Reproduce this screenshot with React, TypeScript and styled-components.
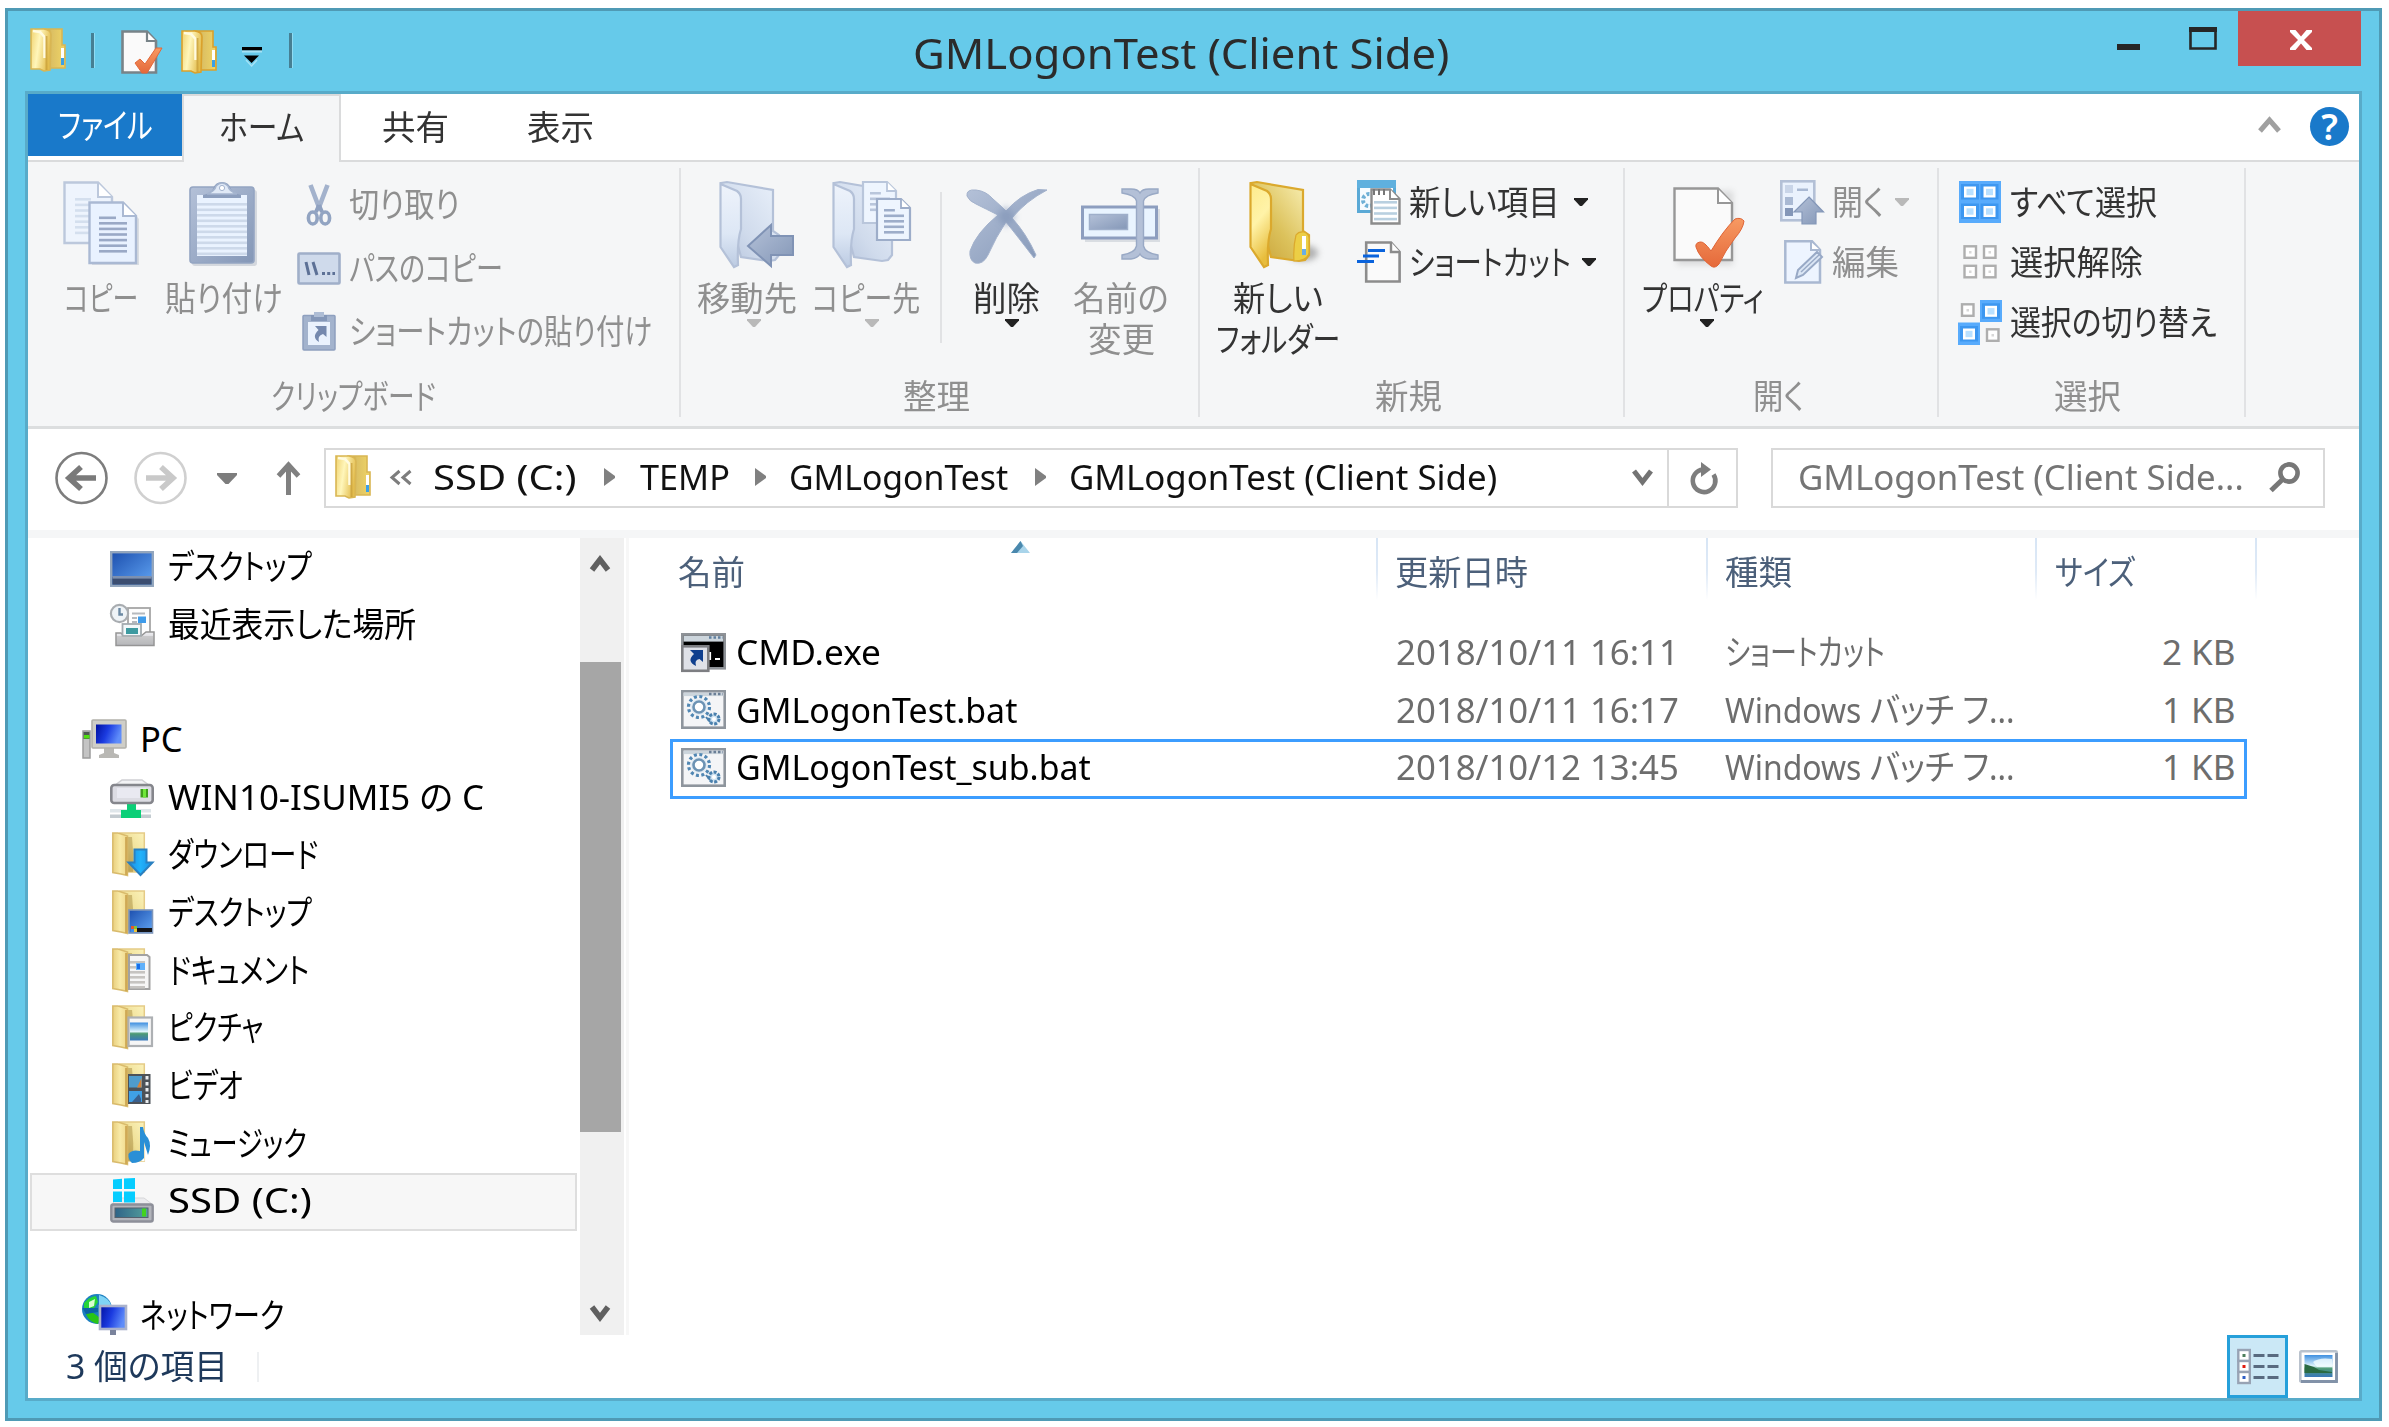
import React, { useLayoutEffect, useRef, useState } from "react";
import styled, { createGlobalStyle } from "styled-components";

const FONT = '"Noto Sans", "Noto Sans CJK JP", sans-serif';

const GlobalStyle = createGlobalStyle`
  * { box-sizing: border-box; }
  body { margin: 0; background: #fff; font-family: ${FONT}; }
  svg { display: block; flex: none; overflow: visible; }
`;

/* ---------- text fitted to a given width ---------- */

const FitBox = styled.span<{ $w: number; $ml?: number; $size: number; $color: string; $lh: number }>`
  display: block;
  flex: none;
  width: ${(p) => p.$w}px;
  height: ${(p) => p.$lh}px;
  margin-left: ${(p) => p.$ml || 0}px;
  font-size: ${(p) => p.$size}px;
  line-height: ${(p) => p.$lh}px;
  color: ${(p) => p.$color};
`;
const FitInk = styled.span`
  display: inline-block;
  white-space: pre;
  transform-origin: 0 50%;
  font-feature-settings: "palt";
`;

type FitProps = { w: number; ml?: number; size?: number; color?: string; lh?: number; children: string };
function Fit({ w, ml, size = 34, color = "#333333", lh = 41, children }: FitProps) {
  const ref = useRef<HTMLSpanElement>(null);
  const [scale, setScale] = useState(1);
  useLayoutEffect(() => {
    if (ref.current && ref.current.offsetWidth) setScale(w / ref.current.offsetWidth);
  }, [w, children]);
  return (
    <FitBox $w={w} $ml={ml} $size={size} $color={color} $lh={lh}>
      <FitInk ref={ref} style={{ transform: `scaleX(${scale})` }}>{children}</FitInk>
    </FitBox>
  );
}

/* ---------- window chrome ---------- */

const Window = styled.div`
  width: 2377px;
  height: 1413px;
  margin: 8px 0 0 5px;
  border: 3px solid #4f9ab5;
  background: #66caea;
  display: flex;
  flex-direction: column;
  overflow: hidden;
`;
const Page = styled.div`
  width: 2389px;
  height: 1427px;
  overflow: hidden;
  display: flex;
  background: #fff;
`;
const TitleBar = styled.div`
  height: 80px;
  display: flex;
  align-items: flex-start;
`;
const QuickAccess = styled.div`
  width: 908px;
  padding-left: 22px;
  display: flex;
  align-items: flex-start;
  padding-top: 17px;
`;
const QuickItem = styled.div<{ $w: number; $top?: number }>`
  width: ${(p) => p.$w}px;
  padding-top: ${(p) => p.$top || 0}px;
`;
const QuickRule = styled.div<{ $w: number }>`
  width: ${(p) => p.$w}px;
  padding-top: 5px;
  &::before { content: ""; display: block; width: 3px; height: 35px; background: #467f93; box-shadow: 1px 0 0 #8fdcf3; }
`;
const TitleText = styled.div`
  width: 1201px;
  padding-top: 16px;
`;
const CaptionButton = styled.div<{ $w: number; $top: number }>`
  width: ${(p) => p.$w}px;
  padding-top: ${(p) => p.$top}px;
`;
const CloseButton = styled.div`
  width: 123px;
  height: 55px;
  background: #c75050;
  display: flex;
  justify-content: center;
  padding: 19px 0 0 2px;
  margin-left: 1px;
`;
const Client = styled.div`
  width: 2337px;
  height: 1310px;
  margin-left: 17px;
  border: 3px solid #58abc9;
  background: #fff;
  display: flex;
  flex-direction: column;
`;

/* ---------- tabs ---------- */

const TabBar = styled.div`
  height: 68px;
  display: flex;
  border-bottom: 2px solid #dadbdc;
`;
const FileTab = styled.div`
  width: 154px;
  height: 62px;
  background: #1979ca;
  padding: 11px 0 0 31px;
`;
const HomeTab = styled.div`
  width: 159px;
  height: 68px;
  background: #f5f6f7;
  border: 2px solid #dadbdc;
  border-bottom: 0;
  padding: 11px 0 0 35px;
`;
const PlainTab = styled.div<{ $w: number }>`
  width: ${(p) => p.$w}px;
  padding: 13px 0 0 41px;
`;
const TabTools = styled.div`
  margin-left: auto;
  display: flex;
  gap: 29px;
  padding: 13px 10px 0 0;
`;
const Chevron = styled.div`
  padding-top: 9px;
`;

/* ---------- ribbon ---------- */

const Ribbon = styled.div`
  height: 267px;
  background: #f5f6f7;
  border-bottom: 3px solid #dcdedf;
  display: flex;
  padding-top: 6px;
`;
const Group = styled.div<{ $w: number }>`
  width: ${(p) => p.$w}px;
  height: 249px;
  border-right: 2px solid #e1e2e4;
  display: flex;
  flex-direction: column;
  justify-content: space-between;
`;
const GroupBody = styled.div`
  display: flex;
  align-items: flex-start;
`;
const GroupLabel = styled.div<{ $pr?: number }>`
  display: flex;
  justify-content: center;
  padding-right: ${(p) => p.$pr || 0}px;
`;
const BigButton = styled.div<{ $w: number; $ml: number }>`
  width: ${(p) => p.$w}px;
  margin-left: ${(p) => p.$ml}px;
  padding-top: 13px;
  display: flex;
  flex-direction: column;
  align-items: center;
`;
const BigIcon = styled.div<{ $dx?: number; $top?: number }>`
  height: 97px;
  padding-left: ${(p) => (p.$dx || 0) * 2}px;
  padding-top: ${(p) => p.$top || 0}px;
`;
const BigArrow = styled.div<{ $dx?: number }>`
  padding-left: ${(p) => (p.$dx || 0) * 2}px;
`;
const GroupRule = styled.div`
  width: 2px;
  height: 151px;
  margin: 24px 0 0 19px;
  background: #e1e2e4;
`;
const SmallColumn = styled.div<{ $ml: number; $top: number }>`
  margin-left: ${(p) => p.$ml}px;
  padding-top: ${(p) => p.$top}px;
`;
const SmallRow = styled.div<{ $h: number }>`
  height: ${(p) => p.$h}px;
  display: flex;
  align-items: center;
`;
const SmallIcon = styled.div`
  width: 44px;
  margin-right: 8px;
  display: flex;
  justify-content: center;
`;
const ArrowSlot = styled.div<{ $ml: number }>`
  margin-left: ${(p) => p.$ml}px;
`;

/* ---------- navigation ---------- */

const NavBar = styled.div`
  height: 101px;
  display: flex;
  align-items: center;
  padding: 0 0 3px 27px;
`;
const NavSlot = styled.div<{ $ml: number }>`
  margin-left: ${(p) => p.$ml}px;
`;
const AddressBox = styled.div`
  margin-left: 24px;
  width: 1414px;
  height: 60px;
  border: 2px solid #d9d9d9;
  display: flex;
  align-items: center;
  padding: 0 0 2px 9px;
`;
const RefreshButton = styled.div`
  width: 69px;
  height: 56px;
  margin: 0 0 -2px auto;
  border-left: 2px solid #d9d9d9;
  display: flex;
  align-items: center;
  justify-content: center;
`;
const SearchBox = styled.div`
  margin-left: 33px;
  width: 554px;
  height: 60px;
  border: 2px solid #d9d9d9;
  display: flex;
  align-items: center;
  padding: 0 22px 2px 25px;
  justify-content: space-between;
`;
const Band = styled.div`
  height: 8px;
  background: #f5f6f7;
`;

/* ---------- main ---------- */

const Main = styled.div`
  height: 797px;
  display: flex;
  overflow: hidden;
`;
const Tree = styled.div`
  width: 552px;
  padding-top: 1px;
  overflow: hidden;
`;
const TreeRow = styled.div<{ $root?: boolean; $on?: boolean }>`
  height: 57.64px;
  margin: 0 3px 0 2px;
  border: 2px solid ${(p) => (p.$on ? "#dedede" : "transparent")};
  background: ${(p) => (p.$on ? "#f7f7f7" : "transparent")};
  padding: 0 0 3px ${(p) => (p.$root ? 50 : 78)}px;
  display: flex;
  align-items: center;
`;
const TreeIcon = styled.div<{ $dy?: number }>`
  width: 44px;
  margin-right: 14px;
  padding-top: ${(p) => (p.$dy || 0) * 2}px;
  display: flex;
  justify-content: center;
`;
const ScrollBar = styled.div`
  width: 44px;
  background: #f0f0f0;
  display: flex;
  flex-direction: column;
`;
const ScrollEnd = styled.div<{ $h: number; $top: number }>`
  height: ${(p) => p.$h}px;
  padding: ${(p) => p.$top}px 0 0 10px;
`;
const ScrollThumb = styled.div`
  height: 470px;
  width: 41px;
  background: #a6a6a6;
`;
const PaneEdge = styled.div`
  width: 3px;
  margin-left: 2px;
  background: #f7f7f7;
`;
const List = styled.div`
  flex: 1;
`;
const HeaderRow = styled.div`
  height: 69px;
  display: grid;
  grid-template-columns: 749px 330px 329px 220px;
`;
const HeaderCell = styled.div<{ $pl: number }>`
  position: relative;
  padding: 14px 0 0 ${(p) => p.$pl}px;
  background: linear-gradient(#d7e5f5, #dfeaf7 55%, #ffffff) right top / 2px 62px no-repeat;
`;
const SortMark = styled.div`
  position: absolute;
  left: 382px;
  top: 3px;
`;
const Rows = styled.div`
  padding-top: 17px;
`;
const FileRow = styled.div<{ $on?: boolean }>`
  height: 60px;
  width: 1577px;
  margin: 0 0 -2.4px 41px;
  padding-bottom: 4px;
  border: 3px solid ${(p) => (p.$on ? "#3c9dff" : "transparent")};
  display: grid;
  grid-template-columns: 704px 330px 330px 1fr;
  align-items: center;
`;
const FileCell = styled.div<{ $pl?: number; $end?: boolean }>`
  display: flex;
  align-items: center;
  padding-left: ${(p) => p.$pl || 0}px;
  padding-right: ${(p) => (p.$end ? 8 : 0)}px;
  justify-content: ${(p) => (p.$end ? "flex-end" : "flex-start")};
`;

const StatusBar = styled.div`
  height: 63px;
  display: flex;
  align-items: center;
  padding-left: 38px;
`;
const StatusRule = styled.div`
  width: 2px;
  height: 30px;
  margin-left: 29px;
  background: #eef0f2;
`;
const DetailsButton = styled.div`
  margin-left: auto;
  width: 61px;
  height: 63px;
  border: 3px solid #26a0da;
  background: #cbe8f6;
  display: flex;
  align-items: center;
  justify-content: center;
`;
const LargeIconsButton = styled.div`
  margin: 0 21px 0 11px;
`;

/* ---------- icons ---------- */

const Defs = () => (
  <svg width="0" height="0" style={{ position: "absolute" }}>
    <defs>
      <linearGradient id="yFront" x1="0" x2="1" y1="0" y2="0.3">
        <stop offset="0" stopColor="#f0d370" /><stop offset="0.45" stopColor="#fff6ba" /><stop offset="1" stopColor="#e3bd4e" />
      </linearGradient>
      <linearGradient id="yBack" x1="0" x2="1" y1="0" y2="0">
        <stop offset="0" stopColor="#a98a3c" /><stop offset="0.4" stopColor="#dcc063" /><stop offset="1" stopColor="#efd466" />
      </linearGradient>
      <linearGradient id="treeFront" x1="0" x2="1" y1="0" y2="0">
        <stop offset="0" stopColor="#e9cf7d" /><stop offset="0.5" stopColor="#f8eaa8" /><stop offset="1" stopColor="#f0d88a" />
      </linearGradient>
      <linearGradient id="treeBack" x1="0" x2="1" y1="1" y2="0">
        <stop offset="0" stopColor="#c2a14e" /><stop offset="0.5" stopColor="#efdf94" /><stop offset="1" stopColor="#fbf2bb" />
      </linearGradient>
      <linearGradient id="bigFront" x1="0" x2="0.3" y1="0" y2="1">
        <stop offset="0" stopColor="#fdeb8c" /><stop offset="0.5" stopColor="#fff3a8" /><stop offset="1" stopColor="#e8bd3c" />
      </linearGradient>
      <linearGradient id="bigBack" x1="1" x2="0" y1="0" y2="1">
        <stop offset="0" stopColor="#fbf3bb" /><stop offset="0.55" stopColor="#dcc25c" /><stop offset="1" stopColor="#c69e33" />
      </linearGradient>
      <linearGradient id="gFront" x1="0" x2="0" y1="0" y2="1">
        <stop offset="0" stopColor="#eef3fb" /><stop offset="0.6" stopColor="#dde7f5" /><stop offset="1" stopColor="#bccbe2" />
      </linearGradient>
      <linearGradient id="gBack" x1="1" x2="0" y1="0" y2="1">
        <stop offset="0" stopColor="#eaf1fb" /><stop offset="0.6" stopColor="#d0dbec" /><stop offset="1" stopColor="#b4c3dc" />
      </linearGradient>
      <linearGradient id="steel" x1="0" x2="1" y1="0" y2="1">
        <stop offset="0" stopColor="#b4c1d8" /><stop offset="1" stopColor="#8497b7" />
      </linearGradient>
      <linearGradient id="orange" x1="0" x2="0" y1="0" y2="1">
        <stop offset="0" stopColor="#f79a63" /><stop offset="1" stopColor="#e5693a" />
      </linearGradient>
      <linearGradient id="screen" x1="0" x2="1" y1="0" y2="1">
        <stop offset="0" stopColor="#1c4fae" /><stop offset="1" stopColor="#62a6f5" />
      </linearGradient>
      <linearGradient id="sky" x1="0" x2="0" y1="0" y2="1">
        <stop offset="0" stopColor="#3f8fe0" /><stop offset="0.5" stopColor="#dff4fb" /><stop offset="0.62" stopColor="#4d9a74" /><stop offset="1" stopColor="#3a78bb" />
      </linearGradient>
      <linearGradient id="metal" x1="0" x2="0" y1="0" y2="1">
        <stop offset="0" stopColor="#f2f2f5" /><stop offset="1" stopColor="#b4b5ba" />
      </linearGradient>
      <linearGradient id="monitor" x1="0" x2="1" y1="0" y2="0.3">
        <stop offset="0" stopColor="#0010a0" /><stop offset="0.5" stopColor="#1b3be0" /><stop offset="1" stopColor="#5f8dfa" />
      </linearGradient>
      <linearGradient id="blueArrow" x1="0" x2="1" y1="0" y2="0">
        <stop offset="0" stopColor="#1a8fe6" /><stop offset="0.5" stopColor="#22b2fa" /><stop offset="1" stopColor="#1a8fe6" />
      </linearGradient>
      <linearGradient id="driveFace" x1="0" x2="1" y1="0" y2="0">
        <stop offset="0" stopColor="#2f6488" /><stop offset="1" stopColor="#55a09c" />
      </linearGradient>
      <filter id="soft" x="-50%" y="-50%" width="200%" height="200%"><feGaussianBlur stdDeviation="3" /></filter>
    </defs>
  </svg>
);

const SmallFolder = ({ edge = "#d9b653" }: { edge?: string }) => (
  <svg width="36" height="44" viewBox="0 0 36 44">
    <path d="M13 1H32V17H35V40H14Z" fill="url(#yBack)" stroke={edge} strokeWidth="1.6" />
    <path d="M1 1H14Q21 2 21 7L20 42L14 43L10 41H1Z" fill="url(#yFront)" stroke={edge} strokeWidth="1.6" />
    <path d="M3 3L10 4L14.500 9V30" fill="none" stroke="#fffbe0" strokeWidth="2.6" />
    <path d="M16.500 8V42" stroke="#c99f38" strokeWidth="2" opacity=".75" />
    <rect x="31" y="20" width="3" height="12" fill="#fff" /><rect x="31" y="30" width="3" height="7" fill="#3aa0e8" />
  </svg>
);

const QuickProps = () => (
  <svg width="42" height="44" viewBox="0 0 42 44">
    <path d="M1.5 1.5H26L35 11V42.5H1.5Z" fill="#fafafa" stroke="#788388" strokeWidth="2.6" />
    <path d="M26 2V11H35" fill="#fff" stroke="#788388" strokeWidth="2.2" />
    <path d="M14 33L19 29L24 34L35 18L41 18L26 43H21Z" fill="url(#orange)" stroke="#e2683a" strokeWidth="1" />
  </svg>
);
const QuickMenu = () => (
  <svg width="20" height="18" viewBox="0 0 20 18">
    <rect y="0" width="20" height="3.5" fill="#000" /><rect y="3.5" width="20" height="2" fill="#a5e2f5" />
    <path d="M2 8.5H17L9.6 16Z" fill="#000" /><path d="M4 13L9.6 19L15 13" fill="none" stroke="#a5e2f5" strokeWidth="1.4" />
  </svg>
);
const Minimize = () => <svg width="24" height="6"><rect width="23" height="6" fill="#262626" /></svg>;
const Maximize = () => (
  <svg width="28" height="23"><path d="M1.5 2V21.5H26.5V2" fill="none" stroke="#262626" strokeWidth="2.600" /><rect width="28" height="5" fill="#262626" /></svg>
);
const CloseX = () => (
  <svg width="24" height="20" viewBox="0 0 24 20"><path d="M1 0H6.500L12 6.500L17.500 0H23V2L15 10L23 18V20H17.500L12 13.500L6.500 20H1V18L9 10L1 2Z" fill="#fff" /></svg>
);
const Collapse = () => (
  <svg width="23" height="18" viewBox="0 0 23 18"><path d="M2 15L11.500 4L21 15" fill="none" stroke="#a0a0a0" strokeWidth="5" /></svg>
);
const HelpDisc = styled.div`
  width: 39px;
  height: 39px;
  border-radius: 50%;
  background: #1979ca;
  color: #fff;
  font: 600 36px/39px ${FONT};
  text-align: center;
`;
const Down = ({ color = "#222" }: { color?: string }) => (
  <svg width="14" height="8" viewBox="0 0 14 8"><path d="M0 0H14V1.500L8 8H6L0 1.500Z" fill={color} /></svg>
);

const docLines = (x: number, y: number, w: number, n: number, step: number, c: string) =>
  Array.from({ length: n }, (_, i) => <rect key={i} x={x} y={y + i * step} width={w} height={2.6} fill={c} />);

const CopyIcon = () => (
  <svg width="76" height="84" viewBox="0 0 76 84">
    <path d="M1.500 1.500H35L49 16V62H1.500Z" fill="#eef4fd" stroke="#bcc8dc" strokeWidth="2.4" />
    <path d="M35 2V16H49" fill="#fff" stroke="#bcc8dc" strokeWidth="2" />
    {docLines(12, 17, 16, 7, 5.600, "#d4dfee")}
    <path d="M29 24H63L76 38V84H29Z" fill="#8892a5" opacity=".25" />
    <path d="M26.500 21.500H60L73 35V82H26.500Z" fill="#e9f2ff" stroke="#aab9d3" strokeWidth="2.4" />
    <path d="M60 22V35H73" fill="#fff" stroke="#aab9d3" strokeWidth="2" />
    <rect x="36" y="35.500" width="17" height="2.600" fill="#9aa9c6" />
    {docLines(36, 41, 28, 6, 5.600, "#9aa9c6")}
  </svg>
);
const PasteIcon = () => (
  <svg width="68" height="84" viewBox="0 0 68 84">
    <rect x="3" y="9" width="65" height="76" rx="3" fill="#8892a5" opacity=".3" />
    <rect x="1" y="6" width="64" height="76" rx="3" fill="url(#steel)" stroke="#94a5c2" strokeWidth="1.600" />
    <rect x="8" y="14" width="50" height="61" fill="#eaf3ff" />
    {docLines(8, 22, 50, 10, 5.500, "#cdd9ea")}
    <path d="M14 17V14Q22 12 24 8Q26 1 33 1Q40 1 42 8Q44 12 52 14V17Z" fill="#8d9fbe" />
    <path d="M18 13Q26 10 27 5Q33 -1 39 5Q40 10 48 13Z" fill="#e0e9f6" stroke="#a5b5cf" strokeWidth="1.500" />
    <circle cx="33" cy="7" r="2.600" fill="#fff" stroke="#a5b5cf" />
  </svg>
);
const CutIcon = () => (
  <svg width="26" height="42" viewBox="0 0 26 42" fill="none" stroke="#a3b2cc">
    <path d="M4.500 1L14 26M21.500 1L12 26" strokeWidth="4.600" />
    <path d="M13 21L10 28M13 21L16 28" strokeWidth="4" stroke="#8fa1c0" />
    <ellipse cx="6.800" cy="34" rx="4.400" ry="6" strokeWidth="3.600" stroke="#92a4c2" />
    <ellipse cx="19.200" cy="34" rx="4.400" ry="6" strokeWidth="3.600" stroke="#92a4c2" />
  </svg>
);
const PathIcon = () => (
  <svg width="44" height="33" viewBox="0 0 44 33">
    <rect x="1.500" y="1.500" width="41" height="30" rx="1" fill="#cfdaeb" stroke="#a0afc9" strokeWidth="2.600" />
    <path d="M9 10L12 23M16 10L20 23" stroke="#5d7196" strokeWidth="3" />
    <path d="M25 21.500H38" stroke="#5d7196" strokeWidth="3" strokeDasharray="3 2.200" />
  </svg>
);
const PasteShortcutIcon = () => (
  <svg width="34" height="39" viewBox="0 0 34 39">
    <rect x="1" y="3.500" width="32" height="34.500" rx="1" fill="#a3b3cd" stroke="#8ea0bf" strokeWidth="1.500" />
    <rect x="6" y="10" width="22" height="23" fill="#eaf2fd" />
    <rect x="9" y="3" width="16" height="6" fill="#8497b8" /><rect x="12" y="0" width="10" height="5" fill="#aebdd5" />
    <path d="M13 14H24.500V25L21 22Q15 24 17 30Q9 25 16.500 18Z" fill="#7589ae" />
  </svg>
);

type BigFolderProps = { blue?: boolean };
const BigFolder = ({ blue }: BigFolderProps) => {
  const line = blue ? "#b4c1d8" : "#dba92d";
  return (
    <g>
      {!blue && <ellipse cx="54" cy="72" rx="15" ry="8" fill="#6c6c6c" opacity=".5" filter="url(#soft)" />}
      <path d="M2 2L8 1L54 9V50L60 54V74L56 79L50 80L22 76Z" fill={blue ? "url(#gBack)" : "url(#bigBack)"} stroke={line} strokeWidth="2.200" />
      {!blue && <path d="M45 80Q44 66 47 54Q50 50 55 51Q61 53 60 60V72Q58 80 45 80Z" fill="#ecce45" stroke={line} strokeWidth="1.200" />}
      {!blue && <><rect x="53" y="55" width="4" height="14" fill="#fff" /><rect x="53" y="68" width="4" height="6" fill="#6aaee6" /></>}
      <path d="M1.500 3L18 10Q22 13 22 18V48Q18 60 19 84L15 86L1.500 66Z" fill={blue ? "url(#gFront)" : "url(#bigFront)"} stroke={line} strokeWidth="2.200" />
    </g>
  );
};
const MoveToIcon = () => (
  <svg width="75" height="87" viewBox="0 0 75 87">
    <BigFolder blue />
    <path d="M29 65L52 44V55H74V74H52V85Z" fill="url(#steel)" stroke="#8093b5" strokeWidth="2" />
  </svg>
);
const Doc = ({ x, y, w, h, c, n }: { x: number; y: number; w: number; h: number; c: string; n: number }) => (
  <g transform={`translate(${x} ${y})`}>
    <path d={`M1 1H${w - 9}L${w} 10V${h}H1Z`} fill="#eef5fe" stroke={c} strokeWidth="2.200" />
    <path d={`M${w - 9} 1V10H${w}`} fill="#fff" stroke={c} strokeWidth="1.800" />
    <rect x="8" y="11" width={w * 0.32} height="2.500" fill={c} />
    {docLines(8, 16.500, w - 14, n, 5.500, c)}
  </g>
);
const CopyToIcon = () => (
  <svg width="80" height="87" viewBox="0 0 80 87">
    <BigFolder blue />
    <Doc x={30} y={0} w={34} h={42} c="#b9c6db" n={3} />
    <Doc x={44} y={17} w={34} h={42} c="#9dadc9" n={4} />
  </svg>
);
const DeleteIcon = () => (
  <svg width="81" height="75" viewBox="0 0 81 75">
    <path d="M1 7Q0 0 10 1Q20 2 27 10Q34 16 40 22Q54 6 72 0.500L81 1Q60 12 46 29Q60 44 70 66L68 69Q52 48 40 33Q30 48 22 66Q17 76 9 74Q3 71 4 62Q10 44 32 26Q20 20 10 15Q3 12 1 7Z" fill="url(#steel)" stroke="#a3b2cc" strokeWidth="1" />
    <path d="M40 17L50 28L40 38L30 27Z" fill="#7f93b5" filter="url(#soft)" opacity=".6" />
  </svg>
);
const RenameIcon = () => (
  <svg width="80" height="70" viewBox="0 0 80 70">
    <rect x="4" y="20" width="75" height="33" fill="#8892a5" opacity=".25" />
    <rect x="1.500" y="18" width="74" height="31" fill="#e9f4ff" stroke="#8d9ebf" strokeWidth="3" />
    <rect x="8.500" y="25.500" width="38" height="15" fill="url(#steel)" stroke="#9fafca" strokeWidth="1.500" />
    <path d="M41 0H50Q57 0 59 4Q61 0 68 0H77V4Q64 6 62.500 12V57Q64 64 77 66V70H68Q61 69 59 65Q57 69 50 70H41V66Q54 64 55.500 57V12Q54 6 41 4Z" fill="#b3c0d7" stroke="#99a9c5" strokeWidth="1.400" />
  </svg>
);
const NewFolderIcon = () => <svg width="70" height="87" viewBox="0 0 70 87"><BigFolder /></svg>;
const NewItemIcon = () => (
  <svg width="44" height="45" viewBox="0 0 44 45">
    <rect x="1.500" y="1.500" width="36" height="30" fill="#f6fbff" stroke="#5aa9d6" strokeWidth="3" />
    <rect x="0" y="0" width="39" height="8" fill="#5fb0de" />
    <circle cx="12" cy="20" r="6" fill="none" stroke="#6fb0d6" strokeWidth="4" strokeDasharray="3 2" />
    <path d="M14.500 9.500H33L42.500 19V43.500H14.500Z" fill="#fff" stroke="#8c8c8c" strokeWidth="2.400" />
    <path d="M33 9V19H42" fill="#fff" stroke="#8c8c8c" strokeWidth="2" />
    <path d="M17 9V15M22 9V15M27 9V15" stroke="#777" strokeWidth="2" />
    {docLines(17, 21, 23, 4, 5.600, "#b9d0e0")}
  </svg>
);
const NewShortcutIcon = () => (
  <svg width="44" height="42" viewBox="0 0 44 42">
    <path d="M9.200 1.500H34L42.600 11V40.500H9.200Z" fill="#fafafa" stroke="#8c8c8c" strokeWidth="2.600" />
    <path d="M34 1V11H43" fill="#fff" stroke="#8c8c8c" strokeWidth="2.400" />
    <path d="M11 9.500H28M6 15H22M0 20.500H17" stroke="#0a63dc" strokeWidth="3" />
  </svg>
);
const PropertiesIcon = () => (
  <svg width="72" height="81" viewBox="0 0 72 81">
    <path d="M4 4H60V78H4Z" fill="#777" opacity=".22" filter="url(#soft)" />
    <path d="M1.500 1.500H45L59 16V73H1.500Z" fill="#fafafa" stroke="#979797" strokeWidth="2.400" />
    <path d="M45 2V16H59" fill="#fff" stroke="#979797" strokeWidth="2" />
    <path d="M23 60Q22 56 27 55Q31 54 38 64Q50 44 62 32Q68 30 71 34Q70 42 62 51Q52 64 46 77Q42 82 38 79Q26 70 23 60Z" fill="url(#orange)" stroke="#df6436" strokeWidth="1" />
  </svg>
);
const OpenIcon = () => (
  <svg width="44" height="45" viewBox="0 0 44 45">
    <rect x="1.300" y="1.300" width="33" height="39" fill="#eaf2fd" stroke="#b3c0d6" strokeWidth="2.600" />
    <rect x="5" y="5" width="8" height="8" fill="#c9d5e8" /><rect x="5" y="17" width="8" height="8" fill="#a9b9d3" /><rect x="5" y="28" width="8" height="8" fill="#8497b8" />
    <rect x="17" y="8.500" width="11" height="2.500" fill="#a9b9d3" />
    <path d="M29 17L43.500 32H36V44H22V32H14Z" fill="url(#steel)" stroke="#8497b8" strokeWidth="1.200" />
  </svg>
);
const EditIcon = () => (
  <svg width="36" height="44" viewBox="0 0 36 44">
    <path d="M1.300 1.300H28L36 10V42.500H1.300Z" fill="#edf4ff" stroke="#a9b8d1" strokeWidth="2.500" />
    <path d="M27 2V10H36" fill="#fff" stroke="#a9b8d1" strokeWidth="2" />
    <path d="M12 38L14 30L33 12L38 17L19 35Z" fill="#dbe6f5" stroke="#98a9c6" strokeWidth="2" />
    <path d="M17 32L35 15" stroke="#98a9c6" strokeWidth="1.400" />
  </svg>
);
const OnTile = ({ x, y }: { x: number; y: number }) => (
  <g transform={`translate(${x} ${y})`}>
    <rect x="0" y="0" width="18" height="15.500" fill="#3d97f0" />
    <rect x="3" y="2.500" width="12" height="11" fill="#fff" />
    <rect x="5.500" y="4.800" width="7" height="6.400" fill="#b9e0ff" />
  </g>
);
const OffTile = ({ x, y }: { x: number; y: number }) => (
  <g transform={`translate(${x} ${y})`}>
    <rect x="1.500" y="1.300" width="11.500" height="11.500" fill="#fff" stroke="#aeaeae" strokeWidth="2.400" />
    <rect x="6" y="6" width="2.500" height="2.500" fill="#d8d8d8" />
  </g>
);
const SelectAllIcon = () => (
  <svg width="42" height="42" viewBox="0 0 42 42">
    <rect width="42" height="42" fill="#58abfc" />
    <OnTile x={2} y={3} /><OnTile x={21.500} y={3} /><OnTile x={2} y={22.500} /><OnTile x={21.500} y={22.500} />
  </svg>
);
const SelectNoneIcon = () => (
  <svg width="34" height="34" viewBox="0 0 34 34"><OffTile x={0} y={0} /><OffTile x={19.500} y={0} /><OffTile x={0} y={19.500} /><OffTile x={19.500} y={19.500} /></svg>
);
const InvertIcon = () => (
  <svg width="44" height="45" viewBox="0 0 44 45">
    <rect x="22" y="0" width="22" height="22" fill="#58abfc" /><rect x="0" y="22.500" width="22" height="22.500" fill="#58abfc" />
    <OffTile x={2.500} y={3} /><OnTile x={24} y={3.300} /><OnTile x={2} y={26} /><OffTile x={27.500} y={28} />
  </svg>
);

const RoundArrow = ({ color, ring, flip }: { color: string; ring: string; flip?: boolean }) => (
  <svg width="53" height="54" viewBox="0 0 53 54">
    <circle cx="26.500" cy="27" r="25" fill="#fff" stroke={ring} strokeWidth="2.600" />
    <g transform={flip ? "translate(53 0) scale(-1 1)" : undefined}>
      <path d="M41 27H15M26 16L14 27L26 38" fill="none" stroke={color} strokeWidth="5.600" />
    </g>
  </svg>
);
const HistoryArrow = () => <svg width="20" height="11"><path d="M0 0H20V2L11.500 11H8.500L0 2Z" fill="#7d7d7d" /></svg>;
const UpArrow = () => (
  <svg width="23" height="33" viewBox="0 0 23 33"><path d="M11.500 33V4M1.500 14L11.500 3L21.500 14" fill="none" stroke="#808080" strokeWidth="5" /></svg>
);
const Laquo = () => (
  <svg width="22" height="15" viewBox="0 0 22 15"><path d="M9.500 1L2 7.500L9.500 14M20.500 1L13 7.500L20.500 14" fill="none" stroke="#7d7d7d" strokeWidth="3" /></svg>
);
const Crumb = () => <svg width="11" height="18"><path d="M0 0L11 8V10L0 18Z" fill="#808080" /></svg>;
const AddressChevron = () => (
  <svg width="21" height="17" viewBox="0 0 21 17"><path d="M2 2L10.500 13L19 2" fill="none" stroke="#737373" strokeWidth="5" /></svg>
);
const RefreshIcon = () => (
  <svg width="28" height="32" viewBox="0 0 28 32">
    <path d="M24.500 12.500A11.300 11.300 0 1 1 14 7.500" fill="none" stroke="#7d7d7d" strokeWidth="4.600" />
    <path d="M12 0L22 7.500L12 15Z" fill="#7d7d7d" />
  </svg>
);
const SearchIcon = () => (
  <svg width="32" height="30" viewBox="0 0 32 30">
    <circle cx="20" cy="11" r="8.600" fill="none" stroke="#777" strokeWidth="4.600" /><path d="M13.500 17.500L2 28.500" stroke="#777" strokeWidth="5" />
  </svg>
);

const ScrollChevron = ({ down }: { down?: boolean }) => (
  <svg width="20" height="17" viewBox="0 0 20 17"><path d={down ? "M2 2L10 12.500L18 2" : "M2 15L10 4.500L18 15"} fill="none" stroke="#606060" strokeWidth="5.600" /></svg>
);
const SortArrow = () => (
  <svg width="19" height="12"><path d="M9.500 0L19 12H0Z" fill="#a9d4ea" /><path d="M9.500 0L0 12H6L12 5Z" fill="#4a88ad" /></svg>
);

const DesktopIcon = () => (
  <svg width="44" height="36" viewBox="0 0 44 36">
    <rect x="1.200" y="1.200" width="41.600" height="33.600" fill="url(#screen)" stroke="#93a6bd" strokeWidth="2.400" />
    <rect x="2.400" y="26" width="39.200" height="7.600" fill="#3b4d70" /><rect x="2.400" y="25" width="39.200" height="2.600" fill="#7c90b0" />
  </svg>
);
const RecentIcon = () => (
  <svg width="44" height="42" viewBox="0 0 44 42">
    <rect x="18" y="4" width="22" height="28" fill="#fdfdfd" stroke="#a6a6a6" strokeWidth="1.800" />
    <path d="M22 9.500H35M22 14H27M22 18H27" stroke="#b5b9be" strokeWidth="2" /><rect x="28" y="12.500" width="8" height="6.500" fill="#3e9bea" />
    <path d="M6 29H11L14 32H31L36 28H44V41.500H6Z" fill="url(#metal)" stroke="#959595" strokeWidth="1.500" />
    <rect x="12.500" y="20" width="18.500" height="12" fill="#f2f8fa" stroke="#a3abb0" strokeWidth="1.800" /><rect x="16" y="24" width="12" height="6" fill="#3d9aa0" />
    <path d="M7 32H43V40H7Z" fill="#b8b8b8" opacity=".55" />
    <circle cx="9.500" cy="9.500" r="8.600" fill="#eef3f7" stroke="#a9adb1" strokeWidth="2.200" /><path d="M9.500 4V10.500H13" fill="none" stroke="#6b89a3" strokeWidth="2.400" />
  </svg>
);
const PcIcon = () => (
  <svg width="45" height="40" viewBox="0 0 45 40">
    <rect x="1" y="12" width="7" height="27" fill="#c4c4c4" stroke="#9c9c9c" strokeWidth="1.500" /><rect x="1.500" y="13" width="6" height="7" fill="#4d5a50" /><rect x="2" y="16" width="5.500" height="3.500" fill="#51e010" />
    <path d="M22 29H32V34L37 36V39H17V36L22 34Z" fill="#b9b8b4" />
    <rect x="10" y="1" width="34" height="28" rx="1" fill="#cfcec8" stroke="#b2b1ab" strokeWidth="1.600" />
    <rect x="14" y="5.500" width="25.500" height="19" fill="url(#monitor)" />
  </svg>
);
const NetDriveIcon = () => (
  <svg width="44" height="39" viewBox="0 0 44 39">
    <path d="M12 1H32L40 7H4Z" fill="#f3f3f5" stroke="#cfcfd3" strokeWidth="1.500" />
    <path d="M0 30H41V33.500H0Z" fill="#dfe6ea" /><path d="M0 35.500H41V39H0Z" fill="#c3cbd0" />
    <path d="M17 24H26V31H31V39H11V31H17Z" fill="#0bcf77" />
    <rect x="1.300" y="6" width="41.400" height="18" rx="3" fill="#dcdce3" stroke="#85868c" strokeWidth="2.600" />
    <rect x="7" y="9" width="29" height="10" fill="#e9e9f1" /><rect x="30.500" y="10" width="7.500" height="8.500" fill="#3f9f1e" /><rect x="33" y="10" width="3" height="8.500" fill="#6fe83a" />
  </svg>
);

const TreeFolder = ({ children }: { children?: React.ReactNode }) => (
  <svg width="41" height="44" viewBox="0 0 41 44">
    <path d="M8 1H32.300V40H14Z" fill="url(#treeBack)" stroke="#e5cb86" strokeWidth="1.500" />
    <path d="M15 5H20Q22 22 21 40H15Z" fill="#a08338" opacity=".45" />
    <path d="M0.800 1H6L15.500 4V43.500L9 42L0.800 40.500Z" fill="url(#treeFront)" stroke="#d9bb6c" strokeWidth="1.500" />
    <path d="M14.300 5V43" stroke="#cfa955" strokeWidth="2.400" />
    {children}
  </svg>
);
const DownloadsIcon = () => <TreeFolder><path d="M22.500 17.500H34.500V30.500H40.500L28.500 43L16.500 30.500H22.500Z" fill="url(#blueArrow)" stroke="#2a80c0" strokeWidth="2" /></TreeFolder>;
const DesktopFolderIcon = () => (
  <TreeFolder><rect x="17" y="20" width="23.500" height="23" fill="url(#screen)" stroke="#7f97bb" strokeWidth="1.600" /><rect x="25" y="38" width="15" height="4" fill="#15161a" /><rect x="19" y="36" width="3" height="3" fill="#e8572a" /><rect x="22" y="36" width="3" height="3" fill="#7fc43a" /><rect x="19" y="39" width="3" height="3" fill="#3f8fe8" /><rect x="22" y="39" width="3" height="3" fill="#f0c43a" /></TreeFolder>
);
const DocumentsIcon = () => (
  <TreeFolder><path d="M17 7H35L37.500 9V41H17Z" fill="#f6f6f6" stroke="#a2a2a2" strokeWidth="2" />{docLines(18, 13, 15, 6, 5, "#c6c4c1")}<rect x="24" y="15" width="9" height="7" fill="#5fb0fa" /><rect x="25" y="16" width="3" height="5" fill="#1a6fe8" /></TreeFolder>
);
const PicturesIcon = () => (
  <TreeFolder><rect x="16.500" y="12.500" width="23.500" height="28.500" fill="#f6f6f6" stroke="#adb0b3" strokeWidth="2.200" /><rect x="18" y="17.500" width="18" height="18" fill="url(#sky)" /></TreeFolder>
);
const VideosIcon = () => (
  <TreeFolder><rect x="16" y="11" width="22.500" height="30" fill="#4d5258" /><rect x="17" y="13" width="13" height="11.500" fill="#4f9ccc" /><rect x="17" y="28" width="13" height="11" fill="#3fa0e6" /><path d="M25 24.500L29.500 15V24.500Z" fill="#d98336" /><path d="M20 39L27 31L29 36V39Z" fill="#3a5f8c" /><path d="M35 13V40" stroke="#e9ecef" strokeWidth="3" strokeDasharray="3.500 2.500" /></TreeFolder>
);
const MusicIcon = () => (
  <TreeFolder><path d="M31 15V40" stroke="#fff" strokeWidth="3" /><path d="M28 6H31Q32 13 36 17Q40 24 36 34L32 21V37Q28 42 20 42Q16 39 16.500 33Q20 28 28 30Z" fill="#2a8fd6" /></TreeFolder>
);
const SsdIcon = () => (
  <svg width="44" height="45" viewBox="0 0 44 45">
    <path d="M8 20H34L42 26H2Z" fill="#ececee" stroke="#d6d6d9" />
    <path d="M3 1.500L12 0.800V11H3ZM14 0.600L25 0V11H14ZM3 13.500H12V24H3ZM14 13.500H25V24.500H14Z" fill="#06cdff" />
    <rect x="1.300" y="26.500" width="41.400" height="17" rx="2" fill="#b2b4bb" stroke="#8d8f99" strokeWidth="2.400" />
    <rect x="5" y="30" width="33" height="9.500" fill="url(#driveFace)" stroke="#55606c" strokeWidth="1" /><rect x="32" y="30.500" width="4" height="8" fill="#41d31d" />
  </svg>
);
const NetworkIcon = () => (
  <svg width="45" height="42" viewBox="0 0 45 42">
    <circle cx="15" cy="15" r="15" fill="#1d7fc0" />
    <path d="M2 9Q7 3 14 2L16 8L12 14L2 14Z" fill="#25d438" /><path d="M7 8L13 5L12 12L7 14Z" fill="#d9ffd0" /><path d="M4 20L10 18L18 24L16 30Q7 28 4 20Z" fill="#29c417" />
    <path d="M17 1Q27 4 29 11L17 14Z" fill="#7fd3f5" /><path d="M0.500 14H16V18L4 20Z" fill="#0d62a6" />
    <rect x="18" y="12" width="26" height="23" fill="url(#monitor)" stroke="#aab2cc" strokeWidth="2.600" />
    <rect x="28" y="36" width="6" height="6" fill="#7a839c" />
  </svg>
);

const CmdIcon = () => (
  <svg width="45" height="39" viewBox="0 0 45 39">
    <rect x="1.300" y="1.300" width="42.400" height="34" fill="#000" stroke="#8e9297" strokeWidth="2.600" />
    <rect x="2.600" y="2.600" width="39.800" height="6" fill="#ccd5dc" /><path d="M28 4.500H42" stroke="#5f7f9f" strokeWidth="2.400" strokeDasharray="2.500 2" />
    <path d="M29 19V27M34 26H39" stroke="#fff" strokeWidth="2.200" />
    <rect x="1.300" y="13.300" width="26" height="24.500" fill="#dfe1e8" stroke="#7d7e82" strokeWidth="2.600" />
    <path d="M9 17H22V29L18.500 26Q13 27 15 33Q5 28 13 21Z" fill="#0f3f8e" />
  </svg>
);
const BatIcon = () => (
  <svg width="45" height="39" viewBox="0 0 45 39">
    <rect x="1.300" y="1.300" width="42.400" height="36.400" fill="#f4f5f7" stroke="#8e959d" strokeWidth="2.600" />
    <rect x="2.600" y="2.600" width="39.800" height="3.500" fill="#ccd5dc" /><path d="M28 4H42" stroke="#6a7f97" strokeWidth="2.400" strokeDasharray="2.500 2" />
    <circle cx="18" cy="17" r="10.500" fill="none" stroke="#5187b3" strokeWidth="3.200" strokeDasharray="3 2.500" />
    <circle cx="18" cy="17" r="8" fill="#dfeaf3" /><circle cx="18" cy="17" r="5.500" fill="#fff" stroke="#6d93b4" strokeWidth="2.600" />
    <circle cx="33" cy="29" r="5" fill="#cfe2f1" stroke="#4a80ad" strokeWidth="3" strokeDasharray="3 1.500" /><circle cx="33" cy="29" r="2" fill="#fff" />
    <path d="M25 27L29 32" stroke="#4a80ad" strokeWidth="2" />
  </svg>
);

const DetailsIcon = () => (
  <svg width="42" height="36" viewBox="0 0 42 36">
    {[["#4d7f5c", 1], ["#e01c10", 12], ["#2f5fc4", 23]].map(([c, y]) => (
      <g key={String(c)}>
        <rect x="1.300" y={Number(y)} width="11.500" height="11" fill="#fff" stroke="#98a3b4" strokeWidth="2.400" />
        <rect x="5.500" y={Number(y) + 4} width="3" height="3" fill={String(c)} />
        <rect x="16.500" y={Number(y) + 4} width="11" height="3" fill="#586a80" /><rect x="30.500" y={Number(y) + 4} width="11" height="3" fill="#586a80" />
      </g>
    ))}
  </svg>
);
const ThumbIcon = () => (
  <svg width="39" height="33" viewBox="0 0 39 33">
    <rect x="1.300" y="1.300" width="36.400" height="30.400" rx="1" fill="#fff" stroke="#b9c2cd" strokeWidth="2.600" />
    <path d="M2 31.500H37.500V3" fill="none" stroke="#8292a8" strokeWidth="2.800" />
    <rect x="5.500" y="5" width="28" height="22" fill="url(#sky)" />
    <path d="M5.500 14Q14 16 20 20L33 22V23H5.500Z" fill="#2a6a42" /><path d="M14 12Q20 7 33 9V17H18Z" fill="#f3fcff" opacity=".8" />
  </svg>
);

/* ---------- data ---------- */

const GREY = "#8f8f8f";
const TREE: { name?: string; w?: number; icon?: React.ReactNode; root?: boolean; on?: boolean; ml?: number; dy?: number; folder?: boolean }[] = [
  { name: "デスクトップ", w: 144, icon: <DesktopIcon />, dy: 3 },
  { name: "最近表示した場所", w: 248, icon: <RecentIcon />, dy: 1 },
  {},
  { name: "PC", w: 43, icon: <PcIcon />, root: true },
  { name: "WIN10-ISUMI5 の C", w: 316, icon: <NetDriveIcon />, dy: 2 },
  { name: "ダウンロード", w: 150, icon: <DownloadsIcon /> },
  { name: "デスクトップ", w: 144, icon: <DesktopFolderIcon /> },
  { name: "ドキュメント", w: 140, icon: <DocumentsIcon />, ml: 1 },
  { name: "ピクチャ", w: 95, icon: <PicturesIcon /> },
  { name: "ビデオ", w: 75, icon: <VideosIcon /> },
  { name: "ミュージック", w: 139, icon: <MusicIcon /> },
  { name: "SSD (C:)", w: 144, icon: <SsdIcon />, on: true },
  {},
  { name: "ネットワーク", w: 144, icon: <NetworkIcon />, root: true },
];

const FILES = [
  { name: "CMD.exe", w: 145, date: "2018/10/11 16:11", type: "ショートカット", tw: 160, size: "2 KB", icon: <CmdIcon /> },
  { name: "GMLogonTest.bat", w: 281, date: "2018/10/11 16:17", type: "Windows バッチ フ...", tw: 290, size: "1 KB", icon: <BatIcon /> },
  { name: "GMLogonTest_sub.bat", w: 355, date: "2018/10/12 13:45", type: "Windows バッチ フ...", tw: 290, size: "1 KB", icon: <BatIcon />, on: true },
];

export default function App() {
  return (
    <Page>
      <GlobalStyle />
      <Defs />
      <Window>
        <TitleBar>
          <QuickAccess>
            <QuickItem $w={61}><SmallFolder /></QuickItem>
            <QuickRule $w={30} />
            <QuickItem $w={60} $top={2}><QuickProps /></QuickItem>
            <QuickItem $w={61} $top={2}><SmallFolder edge="#dba12b" /></QuickItem>
            <QuickItem $w={47} $top={19}><QuickMenu /></QuickItem>
            <QuickRule $w={10} />
          </QuickAccess>
          <TitleText><Fit w={536} size={42.5} lh={52} ml={-3} color="#2b2b2b">GMLogonTest (Client Side)</Fit></TitleText>
          <CaptionButton $w={72} $top={33}><Minimize /></CaptionButton>
          <CaptionButton $w={48} $top={16}><Maximize /></CaptionButton>
          <CloseButton><CloseX /></CloseButton>
        </TitleBar>

        <Client>
          <TabBar>
            <FileTab><Fit w={95} ml={-1} color="#fff">ファイル</Fit></FileTab>
            <HomeTab><Fit w={85}>ホーム</Fit></HomeTab>
            <PlainTab $w={145}><Fit w={67}>共有</Fit></PlainTab>
            <PlainTab $w={145}><Fit w={67}>表示</Fit></PlainTab>
            <TabTools><Chevron><Collapse /></Chevron><HelpDisc>?</HelpDisc></TabTools>
          </TabBar>

          <Ribbon>
            <Group $w={653}>
              <GroupBody>
                <BigButton $w={81} $ml={32}><BigIcon><CopyIcon /></BigIcon><Fit w={74} color={GREY}>コピー</Fit></BigButton>
                <BigButton $w={120} $ml={22}><BigIcon><PasteIcon /></BigIcon><Fit w={117} color={GREY}>貼り付け</Fit></BigButton>
                <SmallColumn $ml={14} $top={5}>
                  <SmallRow $h={63.400}><SmallIcon><CutIcon /></SmallIcon><Fit w={111} color={GREY}>切り取り</Fit></SmallRow>
                  <SmallRow $h={63.400}><SmallIcon><PathIcon /></SmallIcon><Fit w={154} color={GREY}>パスのコピー</Fit></SmallRow>
                  <SmallRow $h={63.400}><SmallIcon><PasteShortcutIcon /></SmallIcon><Fit w={303} color={GREY}>ショートカットの貼り付け</Fit></SmallRow>
                </SmallColumn>
              </GroupBody>
              <GroupLabel><Fit w={165} color={GREY}>クリップボード</Fit></GroupLabel>
            </Group>

            <Group $w={519}>
              <GroupBody>
                <BigButton $w={102} $ml={15}>
                  <BigIcon $dx={9}><MoveToIcon /></BigIcon><Fit w={100} color={GREY}>移動先</Fit><BigArrow $dx={7}><Down color="#b9b9b9" /></BigArrow>
                </BigButton>
                <BigButton $w={110} $ml={13}>
                  <BigIcon $dx={6}><CopyToIcon /></BigIcon><Fit w={108} color={GREY}>コピー先</Fit><BigArrow $dx={6}><Down color="#b9b9b9" /></BigArrow>
                </BigButton>
                <GroupRule />
                <BigButton $w={84} $ml={22}>
                  <BigIcon $top={8}><DeleteIcon /></BigIcon><Fit w={67}>削除</Fit><BigArrow $dx={6}><Down /></BigArrow>
                </BigButton>
                <BigButton $w={96} $ml={25}>
                  <BigIcon $top={8}><RenameIcon /></BigIcon><Fit w={96} color={GREY}>名前の</Fit><Fit w={67} color={GREY}>変更</Fit>
                </BigButton>
              </GroupBody>
              <GroupLabel $pr={6}><Fit w={67} color={GREY}>整理</Fit></GroupLabel>
            </Group>

            <Group $w={425}>
              <GroupBody>
                <BigButton $w={124} $ml={16}>
                  <BigIcon $dx={6}><NewFolderIcon /></BigIcon><Fit w={90}>新しい</Fit><Fit w={124}>フォルダー</Fit>
                </BigButton>
                <SmallColumn $ml={17} $top={4}>
                  <SmallRow $h={60}><SmallIcon><NewItemIcon /></SmallIcon><Fit w={151}>新しい項目</Fit><ArrowSlot $ml={14}><Down /></ArrowSlot></SmallRow>
                  <SmallRow $h={60}><SmallIcon><NewShortcutIcon /></SmallIcon><Fit w={162}>ショートカット</Fit><ArrowSlot $ml={11}><Down /></ArrowSlot></SmallRow>
                </SmallColumn>
              </GroupBody>
              <GroupLabel $pr={6}><Fit w={67} color={GREY}>新規</Fit></GroupLabel>
            </Group>

            <Group $w={314}>
              <GroupBody>
                <BigButton $w={122} $ml={17}>
                  <BigIcon $dx={6} $top={6}><PropertiesIcon /></BigIcon><Fit w={122}>プロパティ</Fit><BigArrow $dx={4}><Down /></BigArrow>
                </BigButton>
                <SmallColumn $ml={16} $top={4}>
                  <SmallRow $h={60}><SmallIcon><OpenIcon /></SmallIcon><Fit w={52} color={GREY}>開く</Fit><ArrowSlot $ml={11}><Down color="#b9b9b9" /></ArrowSlot></SmallRow>
                  <SmallRow $h={60}><SmallIcon><EditIcon /></SmallIcon><Fit w={67} color={GREY}>編集</Fit></SmallRow>
                </SmallColumn>
              </GroupBody>
              <GroupLabel $pr={6}><Fit w={51} color={GREY}>開く</Fit></GroupLabel>
            </Group>

            <Group $w={307}>
              <GroupBody>
                <SmallColumn $ml={19} $top={4}>
                  <SmallRow $h={60}><SmallIcon><SelectAllIcon /></SmallIcon><Fit w={147}>すべて選択</Fit></SmallRow>
                  <SmallRow $h={60}><SmallIcon><SelectNoneIcon /></SmallIcon><Fit w={133}>選択解除</Fit></SmallRow>
                  <SmallRow $h={60}><SmallIcon><InvertIcon /></SmallIcon><Fit w={207}>選択の切り替え</Fit></SmallRow>
                </SmallColumn>
              </GroupBody>
              <GroupLabel $pr={8}><Fit w={67} color={GREY}>選択</Fit></GroupLabel>
            </Group>
          </Ribbon>

          <NavBar>
            <RoundArrow color="#7a7a7a" ring="#7d7d7d" />
            <NavSlot $ml={26}><RoundArrow color="#c9c9c9" ring="#d0d0d0" flip /></NavSlot>
            <NavSlot $ml={30}><HistoryArrow /></NavSlot>
            <NavSlot $ml={40}><UpArrow /></NavSlot>
            <AddressBox>
              <SmallFolder />
              <NavSlot $ml={19}><Laquo /></NavSlot>
              <Fit w={144} ml={21} size={35} lh={46} color="#111">SSD (C:)</Fit>
              <NavSlot $ml={27}><Crumb /></NavSlot>
              <Fit w={90} ml={25} size={35} lh={46} color="#111">TEMP</Fit>
              <NavSlot $ml={25}><Crumb /></NavSlot>
              <Fit w={219} ml={23} size={35} lh={46} color="#111">GMLogonTest</Fit>
              <NavSlot $ml={27}><Crumb /></NavSlot>
              <Fit w={428} ml={23} size={35} lh={46} color="#111">GMLogonTest (Client Side)</Fit>
              <NavSlot $ml={135}><AddressChevron /></NavSlot>
              <RefreshButton><RefreshIcon /></RefreshButton>
            </AddressBox>
            <SearchBox>
              <Fit w={446} size={35} lh={46} color="#757575">GMLogonTest (Client Side...</Fit>
              <SearchIcon />
            </SearchBox>
          </NavBar>
          <Band />

          <Main>
            <Tree>
              {TREE.map((t, i) => (
                <TreeRow key={i} $root={t.root} $on={t.on}>
                  {t.name && (
                    <>
                      <TreeIcon $dy={t.dy}>{t.icon}</TreeIcon>
                      <Fit w={t.w!} ml={t.ml} size={34.500} lh={44} color="#000">{t.name}</Fit>
                    </>
                  )}
                </TreeRow>
              ))}
            </Tree>
            <ScrollBar>
              <ScrollEnd $h={124} $top={17}><ScrollChevron /></ScrollEnd>
              <ScrollThumb />
              <ScrollEnd $h={203} $top={173}><ScrollChevron down /></ScrollEnd>
            </ScrollBar>
            <PaneEdge />
            <List>
              <HeaderRow>
                <HeaderCell $pl={49}><Fit w={67} color="#4c607a">名前</Fit><SortMark><SortArrow /></SortMark></HeaderCell>
                <HeaderCell $pl={17}><Fit w={133} color="#4c607a">更新日時</Fit></HeaderCell>
                <HeaderCell $pl={17}><Fit w={67} color="#4c607a">種類</Fit></HeaderCell>
                <HeaderCell $pl={18}><Fit w={80} color="#4c607a">サイズ</Fit></HeaderCell>
              </HeaderRow>
              <Rows>
                {FILES.map((f) => (
                  <FileRow key={f.name} $on={f.on}>
                    <FileCell $pl={8}>{f.icon}<Fit w={f.w} ml={10} size={35} lh={46} color="#000">{f.name}</Fit></FileCell>
                    <FileCell $pl={19}><Fit w={283} size={35} lh={46} color="#6d6d6d">{f.date}</Fit></FileCell>
                    <FileCell $pl={18}><Fit w={f.tw} size={35} lh={46} color="#6d6d6d">{f.type}</Fit></FileCell>
                    <FileCell $end><Fit w={74} size={35} lh={46} color="#6d6d6d">{f.size}</Fit></FileCell>
                  </FileRow>
                ))}
              </Rows>
            </List>
          </Main>

          <StatusBar>
            <Fit w={162} size={34} color="#1e395b">3 個の項目</Fit>
            <StatusRule />
            <DetailsButton><DetailsIcon /></DetailsButton>
            <LargeIconsButton><ThumbIcon /></LargeIconsButton>
          </StatusBar>
        </Client>
      </Window>
    </Page>
  );
}
